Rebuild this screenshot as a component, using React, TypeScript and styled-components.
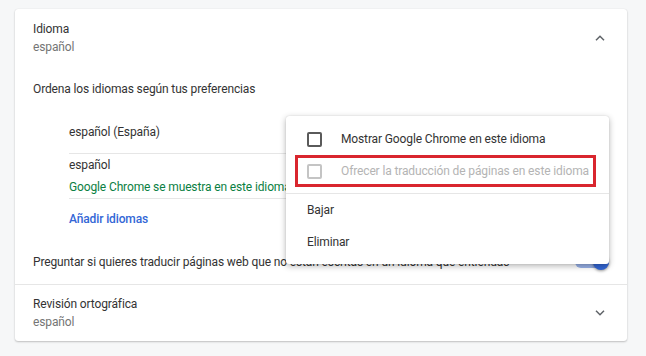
import React from "react";
import styled, { createGlobalStyle } from "styled-components";

const Global = createGlobalStyle`
  html, body { margin: 0; padding: 0; }
  body {
    background: #f6f7f8;
    font-family: Roboto, "Liberation Sans", Arial, sans-serif;
    font-size: 12px;
    letter-spacing: -0.13px;
    color: #333333;
    -webkit-font-smoothing: antialiased;
  }
`;

const Page = styled.div`
  width: 646px;
  height: 356px;
  padding: 9px 0 0 15px;
  box-sizing: border-box;
`;

const Card = styled.div`
  position: relative;
  width: 612px;
  background: #ffffff;
  border-radius: 3px;
  box-shadow: 0 1px 2px rgba(0, 0, 0, 0.22), 0 0 1px rgba(0, 0, 0, 0.12);
`;

const Section = styled.div`
  padding: 0 18px;
  display: flex;
  flex-direction: column;
`;

const HeaderRow = styled.div<{ $top: number; $bottom: number }>`
  display: flex;
  align-items: center;
  justify-content: space-between;
  padding: ${(p) => p.$top}px 0 ${(p) => p.$bottom}px;
`;

const TextBlock = styled.div`
  display: flex;
  flex-direction: column;
  line-height: 18px;
`;

const Title = styled.div`
  color: #333333;
`;

const Secondary = styled.div`
  color: #757575;
`;

const Label = styled.div`
  line-height: 18px;
  margin-top: 24px;
`;

const LangList = styled.div`
  margin-top: 12px;
  padding-left: 36px;
  display: flex;
  flex-direction: column;
`;

const LangItem = styled.div<{ $h: number }>`
  min-height: ${(p) => p.$h}px;
  display: flex;
  flex-direction: column;
  justify-content: center;
  gap: 2px;
  line-height: 20px;
  border-bottom: 1px solid #e6e6e6;
  box-sizing: border-box;
`;

const GreenNote = styled.div`
  color: #0b8043;
`;

const AddLink = styled.div`
  height: 40px;
  display: flex;
  align-items: center;
  color: #3367d6;
  font-weight: 500;
`;

const ToggleRow = styled.div`
  height: 45px;
  padding-top: 1px;
  box-sizing: border-box;
  display: flex;
  align-items: center;
  justify-content: space-between;
  white-space: nowrap;
`;

const Toggle = styled.div`
  position: relative;
  width: 34px;
  height: 12px;
  border-radius: 6px;
  background: rgba(51, 103, 214, 0.5);
`;

const Knob = styled.div`
  position: absolute;
  right: 0;
  top: -2px;
  width: 16px;
  height: 16px;
  border-radius: 50%;
  background: #3367d6;
  box-shadow: 0 1px 3px rgba(0, 0, 0, 0.4);
`;

const Divider = styled.div`
  height: 1px;
  background: #e6e6e6;
`;

const ChevronBox = styled.div`
  width: 18px;
  height: 18px;
  display: flex;
  align-items: center;
  justify-content: center;
  color: #5f6368;
`;

const Menu = styled.div`
  position: absolute;
  left: 271px;
  top: 107px;
  width: 323px;
  padding: 7px 0 6px;
  background: #ffffff;
  border-radius: 3px;
  box-shadow: 0 2px 6px rgba(0, 0, 0, 0.3), 0 0 1px rgba(0, 0, 0, 0.2);
  box-sizing: border-box;
  display: flex;
  flex-direction: column;
`;

const MenuItem = styled.div<{ $disabled?: boolean; $marked?: boolean }>`
  position: relative;
  height: 32px;
  padding-left: 21px;
  display: flex;
  align-items: center;
  gap: 19px;
  white-space: nowrap;
  color: ${(p) => (p.$disabled ? "#b4b4b4" : "#333333")};
  ${(p) =>
    p.$marked &&
    `
    &::after {
      content: "";
      position: absolute;
      left: 9px;
      right: 13px;
      top: 0;
      bottom: 0;
      border: 3px solid #d9262e;
    }
  `}
`;

const CheckBox = styled.div<{ $disabled?: boolean }>`
  width: 11px;
  height: 11px;
  flex: none;
  border: 2px solid ${(p) => (p.$disabled ? "#c4c4c4" : "#5a5a5a")};
  border-radius: 2px;
`;

const MenuSep = styled.div`
  height: 1px;
  background: #e6e6e6;
  margin: 6px 0 0;
`;

const Chevron = ({ up }: { up?: boolean }) => (
  <svg width="10" height="6" viewBox="0 0 10 6">
    <polyline
      points={up ? "1,5.2 5,1.2 9,5.2" : "1,0.8 5,4.8 9,0.8"}
      fill="none"
      stroke="currentColor"
      strokeWidth="1.5"
    />
  </svg>
);

export default function App() {
  return (
    <>
      <Global />
      <Page>
        <Card>
          <Section>
            <HeaderRow $top={11} $bottom={0}>
              <TextBlock>
                <Title>Idioma</Title>
                <Secondary>español</Secondary>
              </TextBlock>
              <ChevronBox>
                <Chevron up />
              </ChevronBox>
            </HeaderRow>
            <Label>Ordena los idiomas según tus preferencias</Label>
            <LangList>
              <LangItem $h={44}>
                <div>español (España)</div>
              </LangItem>
              <LangItem $h={45}>
                <div>español</div>
                <GreenNote>Google Chrome se muestra en este idioma</GreenNote>
              </LangItem>
              <AddLink>Añadir idiomas</AddLink>
            </LangList>
            <ToggleRow>
              <span>
                Preguntar si quieres traducir páginas web que no están escritas
                en un idioma que entiendas
              </span>
              <Toggle>
                <Knob />
              </Toggle>
            </ToggleRow>
          </Section>
          <Divider />
          <Section>
            <HeaderRow $top={10} $bottom={10}>
              <TextBlock>
                <Title>Revisión ortográfica</Title>
                <Secondary>español</Secondary>
              </TextBlock>
              <ChevronBox>
                <Chevron />
              </ChevronBox>
            </HeaderRow>
          </Section>

          <Menu>
            <MenuItem>
              <CheckBox />
              <span>Mostrar Google Chrome en este idioma</span>
            </MenuItem>
            <MenuItem $disabled $marked>
              <CheckBox $disabled />
              <span>Ofrecer la traducción de páginas en este idioma</span>
            </MenuItem>
            <MenuSep />
            <MenuItem>Bajar</MenuItem>
            <MenuItem>Eliminar</MenuItem>
          </Menu>
        </Card>
      </Page>
    </>
  );
}
